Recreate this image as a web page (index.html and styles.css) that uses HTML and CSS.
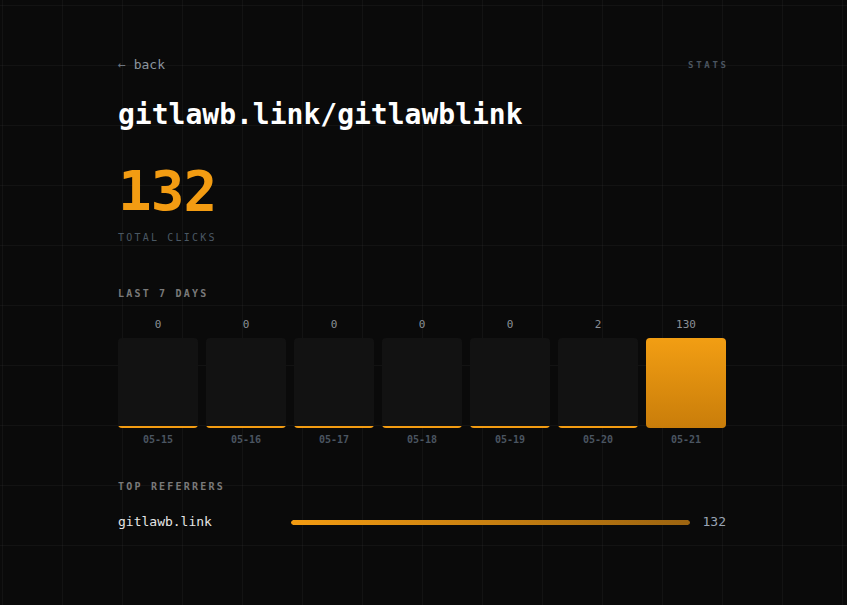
FILE: index.html
```html
<!DOCTYPE html>
<html lang="en">
<head>
<meta charset="utf-8">
<title>gitlawb.link/gitlawblink — stats</title>
<link rel="stylesheet" href="styles.css">
</head>
<body>
<main class="page">
  <div class="topbar">
    <a class="back" href="#"><span class="arrow">←</span> back</a>
    <span class="tag">STATS</span>
  </div>
  <h1 class="title">gitlawb.link/gitlawblink</h1>
  <div class="total">132</div>
  <div class="label total-label">TOTAL CLICKS</div>

  <div class="label section">LAST 7 DAYS</div>
  <div class="days">
    <div class="day"><span class="val">0</span><div class="track"><div class="fill" style="height:2px"></div></div><span class="date">05-15</span></div>
    <div class="day"><span class="val">0</span><div class="track"><div class="fill" style="height:2px"></div></div><span class="date">05-16</span></div>
    <div class="day"><span class="val">0</span><div class="track"><div class="fill" style="height:2px"></div></div><span class="date">05-17</span></div>
    <div class="day"><span class="val">0</span><div class="track"><div class="fill" style="height:2px"></div></div><span class="date">05-18</span></div>
    <div class="day"><span class="val">0</span><div class="track"><div class="fill" style="height:2px"></div></div><span class="date">05-19</span></div>
    <div class="day"><span class="val">2</span><div class="track"><div class="fill" style="height:2px"></div></div><span class="date">05-20</span></div>
    <div class="day"><span class="val">130</span><div class="track"><div class="fill full" style="height:100%"></div></div><span class="date">05-21</span></div>
  </div>

  <div class="label section ref-head">TOP REFERRERS</div>
  <div class="ref">
    <span class="ref-name">gitlawb.link</span>
    <div class="ref-bar"><div class="ref-fill" style="width:100%"></div></div>
    <span class="ref-count">132</span>
  </div>
</main>
</body>
</html>
```

FILE: styles.css
```css
html, body {
  margin: 0;
  padding: 0;
}
body {
  min-height: 605px;
  padding-right: 3px;
  background-color: #0a0a0a;
  background-image:
    linear-gradient(to right, rgba(255,255,255,0.035) 1px, transparent 1px),
    linear-gradient(to bottom, rgba(255,255,255,0.035) 1px, transparent 1px);
  background-size: 60px 60px;
  background-position: 2px 5px;
  font-family: "DejaVu Sans Mono", "Liberation Mono", monospace;
  color: #e6e6e6;
}
.page {
  width: 608px;
  margin: 0 auto;
  padding-top: 57px;
}
.topbar {
  display: flex;
  justify-content: space-between;
  align-items: center;
  height: 16px;
}
.back {
  font-size: 13px;
  line-height: 16px;
  color: #8b949e;
  text-decoration: none;
}
.back .arrow {
  color: #6b7480;
}
.tag {
  font-size: 9px;
  line-height: 16px;
  letter-spacing: 0.3em;
  margin-right: -0.3em;
  color: #4b5560;
  font-weight: bold;
}
.title {
  margin: 25px 0 0;
  font-size: 28px;
  line-height: 34px;
  font-weight: bold;
  color: #ffffff;
}
.total {
  margin-top: 31px;
  font-size: 56px;
  line-height: 56px;
  font-weight: bold;
  color: #f39c12;
  letter-spacing: -1px;
}
.label {
  font-size: 10px;
  line-height: 14px;
  letter-spacing: 0.22em;
}
.total-label {
  margin-top: 12px;
  color: #4a5864;
}
.section {
  margin-top: 42px;
  color: #7a7a7a;
  font-weight: bold;
}
.days {
  margin-top: 17px;
  display: grid;
  grid-template-columns: repeat(7, 1fr);
  gap: 8px;
}
.day {
  display: flex;
  flex-direction: column;
  align-items: center;
}
.val {
  font-size: 11px;
  line-height: 14px;
  color: #8b9096;
}
.track {
  margin-top: 6px;
  width: 100%;
  height: 90px;
  background: #121212;
  border-radius: 4px;
  overflow: hidden;
  display: flex;
  flex-direction: column;
  justify-content: flex-end;
}
.fill {
  width: 100%;
  background: #f39c12;
}
.fill.full {
  background: linear-gradient(to bottom, #f29e13, #c97d0a);
}
.date {
  margin-top: 5px;
  font-size: 10px;
  line-height: 14px;
  color: #4a5561;
  font-weight: bold;
}
.ref-head {
  margin-top: 33px;
}
.ref {
  margin-top: 19px;
  display: grid;
  grid-template-columns: 160px 1fr auto;
  column-gap: 13px;
  align-items: center;
}
.ref-name {
  font-size: 13px;
  line-height: 18px;
  color: #e6e6e6;
}
.ref-bar {
  height: 5px;
  border-radius: 3px;
  overflow: hidden;
}
.ref-fill {
  height: 100%;
  border-radius: 3px;
  background: linear-gradient(to right, #f39c12, #9c6410);
}
.ref-count {
  font-size: 13px;
  line-height: 18px;
  color: #9aa5b5;
  text-align: right;
}
```
